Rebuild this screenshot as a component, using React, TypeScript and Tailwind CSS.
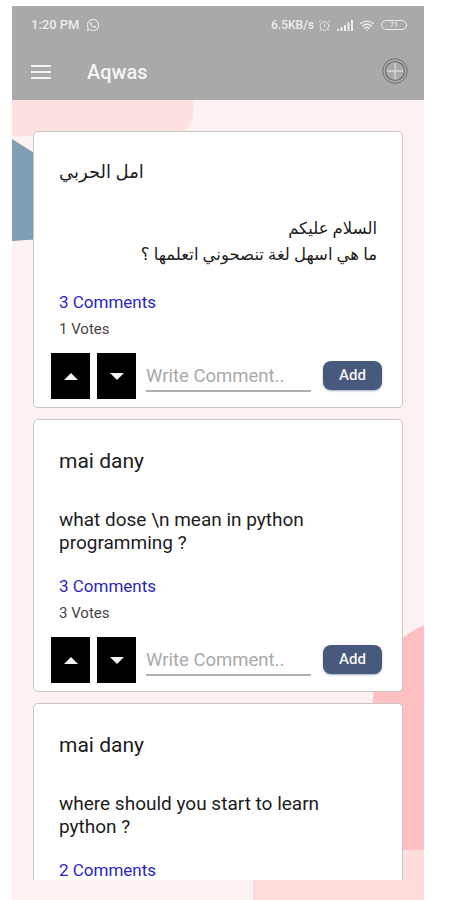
import { AlarmClock, Wifi } from "lucide-react";
import { FaWhatsapp } from "react-icons/fa";

const posts = [
  {
    name: "امل الحربي",
    body: ["السلام عليكم", "ما هي اسهل لغة تنصحوني اتعلمها ؟"],
    comments: "3 Comments",
    votes: "1 Votes",
    arabic: true,
  },
  {
    name: "mai dany",
    body: ["what dose \\n mean in python", "programming ?"],
    comments: "3 Comments",
    votes: "3 Votes",
    arabic: false,
  },
  {
    // cut off by the bottom of the list, nothing below the comments shows
    name: "mai dany",
    body: ["where should you start to learn", "python ?"],
    comments: "2 Comments",
    votes: "",
    arabic: false,
  },
];

function StatusBar() {
  return (
    <div className="flex h-[38px] items-center justify-between pl-[19px] pr-[17px] text-[#ececec]">
      <div className="flex items-center gap-[6px] text-[13px] font-medium">
        <span>1:20 PM</span>
        <FaWhatsapp className="h-[14px] w-[14px]" />
      </div>
      <div className="flex items-center text-[12px] font-medium">
        <span>6.5KB/s</span>
        <AlarmClock className="ml-[4px] h-[13px] w-[13px]" strokeWidth={1.75} />
        <svg className="ml-[6px] h-[11px] w-[16px]" viewBox="0 0 16 11" fill="currentColor">
          <rect x="0" y="9" width="2" height="2" />
          <rect x="3.5" y="7" width="2" height="4" />
          <rect x="7" y="5" width="2" height="6" />
          <rect x="10.5" y="2.5" width="2" height="8.5" />
          <rect x="14" y="0" width="2" height="11" />
        </svg>
        <Wifi className="ml-[6px] h-[15px] w-[16px]" strokeWidth={2.25} />
        <div className="ml-[6px] flex h-[10px] w-[26px] items-center justify-center rounded-full border border-[#ececec] text-[7px] leading-none">
          71
        </div>
      </div>
    </div>
  );
}

function Toolbar() {
  return (
    <div className="flex h-[56px] items-center pl-[19px] pr-[16px]">
      <div className="flex w-[20px] flex-col gap-[3.5px]">
        <div className="h-[2.5px] bg-[#f2f2f2]" />
        <div className="h-[2.5px] bg-[#f2f2f2]" />
        <div className="h-[2.5px] bg-[#f2f2f2]" />
      </div>
      <span className="ml-[36px] text-[20px] font-medium text-[#f5f5f5]">Aqwas</span>
      <svg className="mb-[2px] ml-auto h-[26px] w-[26px]" viewBox="0 0 26 26" fill="none" stroke="#707070">
        <circle cx="13" cy="13" r="12.3" strokeWidth="1" />
        <circle cx="13" cy="13" r="9.5" strokeWidth="1.2" />
        <path d="M5 13h16M13 5v16" stroke="#d8d8d8" strokeWidth="1.3" />
      </svg>
    </div>
  );
}

function VoteButton({ up }: { up: boolean }) {
  return (
    <button className="flex h-[46px] w-[39px] items-center justify-center bg-black">
      <svg className="h-[7px] w-[14px]" viewBox="0 0 14 7" fill="#f4f4f4">
        <path d={up ? "M7 0l7 7H0z" : "M0 0h14L7 7z"} />
      </svg>
    </button>
  );
}

function PostCard({ post }: { post: (typeof posts)[number] }) {
  return (
    <div className={post.votes ? "shrink-0 rounded-[5px] border border-[#c9c5c5] bg-white" : "shrink-0 rounded-[5px] border border-[#c9c5c5] bg-white pb-[40px]"}>
      <div className={post.arabic ? "mt-[26px] h-[28px] pl-[25px] text-[18px] leading-[28px] text-[#1c1c1c]" : "mt-[27px] h-[28px] pl-[25px] text-[21px] leading-[28px] text-[#1c1c1c]"}>
        {post.name}
      </div>
      {post.arabic ? (
        <div dir="rtl" className="mt-[30px] pr-[25px] text-[16.5px] leading-[26px] text-[#1c1c1c]">
          {post.body.map((line) => (
            <div key={line}>{line}</div>
          ))}
        </div>
      ) : (
        <div className="mt-[33px] pl-[25px] text-[19px] leading-[23px] text-[#1c1c1c]">
          {post.body.map((line) => (
            <div key={line}>{line}</div>
          ))}
        </div>
      )}
      <div className={post.arabic ? "mt-[23px] pl-[25px] text-[17px] leading-[22px] text-[#2a1fc4]" : "mt-[21px] pl-[25px] text-[17px] leading-[22px] text-[#2a1fc4]"}>
        {post.comments}
      </div>
      {post.votes && (
        <>
          <div className="mt-[7px] pl-[25px] text-[15px] leading-[18px] text-[#444444]">{post.votes}</div>
          <div className="mt-[15px] flex items-start pb-[8px] pl-[17px] pr-[20px]">
            <VoteButton up />
            <div className="ml-[7px]">
              <VoteButton up={false} />
            </div>
            <div className="ml-[10px] mt-[11px] h-[28px] w-[165px] border-b-2 border-[#b0b0b0] text-[18.5px] leading-[24px] text-[#a9a9a9]">
              Write Comment..
            </div>
            <button className="ml-auto mt-[8px] h-[29px] w-[59px] rounded-[8px] bg-[#475a7e] text-[15px] font-medium text-[#f4f4f4] shadow-[0_1px_2px_rgba(71,90,126,0.5)]">
              Add
            </button>
          </div>
        </>
      )}
    </div>
  );
}

export default function App() {
  return (
    <div className="h-[900px] w-[450px] overflow-hidden bg-white pl-[12px] pt-[6px] font-['Roboto','DejaVu_Sans',sans-serif]">
      <div className="relative h-[894px] w-[412px] overflow-hidden bg-[#fdf2f2]">
        {/* background shapes */}
        <div className="absolute left-0 top-[94px] h-[36px] w-[181px] rounded-br-[22px] bg-[#fde0e0]" />
        <svg className="absolute left-0 top-[130px] h-[110px] w-[30px]" viewBox="0 0 30 110">
          <path d="M0 3 L30 22 V103 L0 105z" fill="#7f9fb4" />
        </svg>
        <div className="absolute -right-[39px] top-[614px] h-[230px] w-[90px] rounded-tl-[80px] bg-[#fdc0c2]" />
        <div className="absolute bottom-0 right-0 h-[50px] w-[171px] rounded-tl-[4px] bg-[#fddcdc]" />

        <div className="relative">
          <div className="h-[94px] bg-[#a9a9a9]">
            <StatusBar />
            <Toolbar />
          </div>
          <div className="flex h-[780px] flex-col gap-[11px] overflow-hidden pl-[21px] pr-[21px] pt-[31px]">
            {posts.map((post, i) => (
              <PostCard key={i} post={post} />
            ))}
          </div>
        </div>
      </div>
    </div>
  );
}
